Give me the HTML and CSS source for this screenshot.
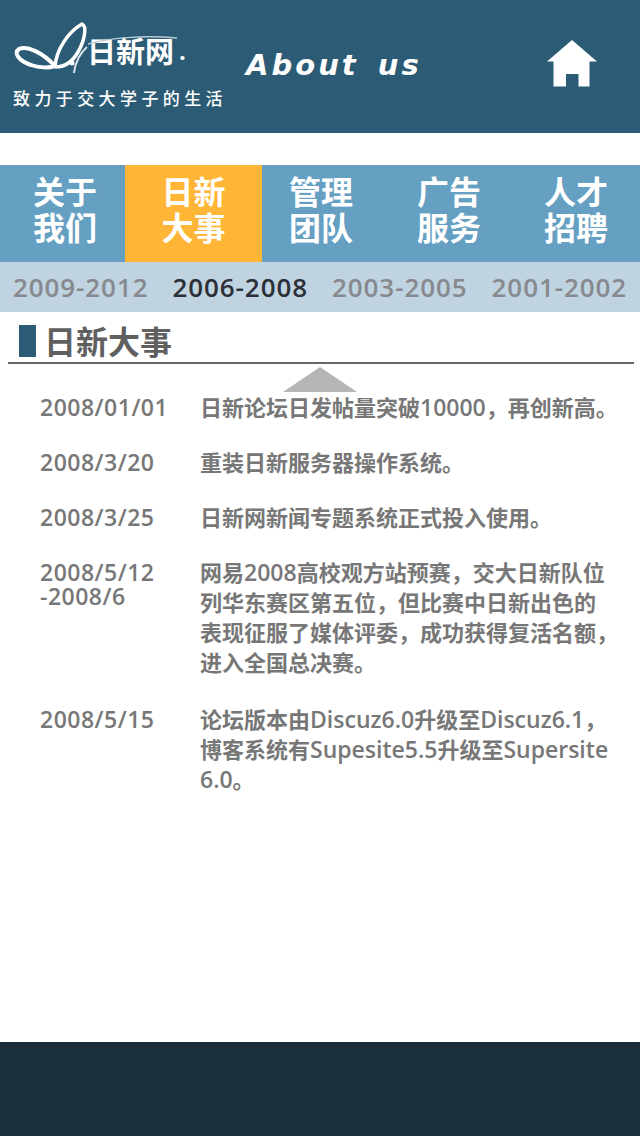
FILE: index.html
```html
<!DOCTYPE html>
<html>
    <head lang="zh-CN">
        <meta charset="UTF-8">
        <title>日新大事</title>
        <link rel="stylesheet" href="styles.css">
    </head>
    <body>
        <div id="header">
            <div id="logo">
                <div id="logo-mark">
                    <svg class="wing" width="170" height="56" viewBox="0 0 170 56">
                        <g fill="none" stroke="#fff">
                            <path stroke-width="4" d="M42 46C30 33 14 25 6 29C0 33 6 41 18 45C26 48 36 48 42 46"/>
                            <path stroke-width="3.5" d="M42 47C43 30 55 12 69 4C74 6 72 20 65 32C60 41 52 47 42 47"/>
                            <path stroke-width="2" stroke="#d8e2e8" d="M61 53C62 42 68 32 74 27"/>
                            <path stroke-width="1.5" stroke="#b9cad5" d="M75 24C95 18 130 15 164 18"/>
                        </g>
                        <circle cx="59" cy="43" r="2.5" fill="#fff"/>
                    </svg>
                    <span id="logo-name">日新网</span><span id="logo-dot">.</span>
                </div>
                <p id="slogan">致力于交大学子的生活</p>
            </div>
            <h1 id="title">About us</h1>
            <svg id="home" width="50" height="47" viewBox="0 0 50 47">
                <path d="M25 0L50 21.5H42.5V46.5H31.5V34H19V46.5H6.5V21.5H0Z" fill="#fff"/>
            </svg>
        </div>

        <ul id="nav">
            <li>关于<br>我们</li>
            <li class="selected">日新<br>大事</li>
            <li>管理<br>团队</li>
            <li>广告<br>服务</li>
            <li>人才<br>招聘</li>
        </ul>

        <ul id="years">
            <li>2009-2012</li>
            <li class="selected">2006-2008</li>
            <li>2003-2005</li>
            <li>2001-2002</li>
        </ul>

        <h2 id="heading">日新大事</h2>

        <div id="content">
            <div id="arrow"></div>
            <div class="event">
                <div class="date">2008/01/01</div>
                <div class="text">日新论坛日发帖量突破<span class="latin">10000</span>，再创新高。</div>
            </div>
            <div class="event">
                <div class="date">2008/3/20</div>
                <div class="text">重装日新服务器操作系统。</div>
            </div>
            <div class="event">
                <div class="date">2008/3/25</div>
                <div class="text">日新网新闻专题系统正式投入使用。</div>
            </div>
            <div class="event">
                <div class="date">2008/5/12<br>-2008/6</div>
                <div class="text">网易<span class="latin">2008</span>高校观方站预赛，交大日新队位<br>列华东赛区第五位，但比赛中日新出色的<br>表现征服了媒体评委，成功获得复活名额，<br>进入全国总决赛。</div>
            </div>
            <div class="event">
                <div class="date">2008/5/15</div>
                <div class="text">论坛版本由<span class="latin">Discuz6.0</span>升级至<span class="latin">Discuz6.1</span>，<br>博客系统有<span class="latin">Supesite5.5</span>升级至<span class="latin">Supersite</span><br><span class="latin">6.0</span>。</div>
            </div>
        </div>

        <div id="footer"></div>
    </body>
</html>
```

FILE: styles.css
```css
*{
    margin:0;
    padding:0;
}
ul,ol{
    list-style:none;
}
html,body{
    height:100%;
}
body{
    display:flex;
    flex-direction:column;
    background-color:#fff;
    font-family:"Open Sans","Noto Sans CJK SC",sans-serif;
    overflow:hidden;
}
#header{
    height:133px;
    flex:none;
    display:flex;
    align-items:flex-start;
    background-color:#2c5b75;
    color:#fff;
}
#logo{
    width:246px;
    flex:none;
    padding:20px 0 0 13px;
    box-sizing:border-box;
}
#logo-mark{
    display:flex;
    align-items:flex-end;
    height:47px;
    position:relative;
}
.wing{
    position:absolute;
    left:0;
    top:0;
}
#logo-name{
    margin-left:74px;
    font-family:"Noto Sans CJK SC",sans-serif;
    font-size:29px;
    line-height:34px;
    font-weight:700;
    white-space:nowrap;
}
#logo-dot{
    font-size:24px;
    line-height:32px;
    font-weight:700;
    margin-left:5px;
}
#slogan{
    margin-top:20px;
    font-family:"Noto Sans CJK SC",serif;
    font-size:17px;
    line-height:22px;
    font-weight:500;
    letter-spacing:4.4px;
    white-space:nowrap;
}
#title{
    width:301px;
    flex:none;
    margin-top:43px;
    font-family:"DejaVu Sans",sans-serif;
    font-style:italic;
    font-size:29px;
    line-height:44px;
    font-weight:700;
    letter-spacing:3px;
    word-spacing:6px;
    white-space:pre;
}
#home{
    flex:none;
    margin-top:40px;
}
#nav{
    flex:none;
    margin-top:32px;
    height:97px;
    display:flex;
    background-color:#659fc2;
    color:#fff;
}
#nav li{
    flex:none;
    box-sizing:border-box;
    padding-top:9px;
    text-align:center;
    font-size:32px;
    line-height:36px;
    font-weight:700;
}
#nav li:nth-child(1){
    width:125px;
    padding-left:5px;
}
#nav li:nth-child(2){
    width:137px;
    background-color:#ffb636;
}
#nav li:nth-child(3){
    width:118px;
}
#nav li:nth-child(4){
    width:138px;
}
#nav li:nth-child(5){
    width:122px;
    padding-right:6px;
}
#years{
    flex:none;
    height:50px;
    display:flex;
    justify-content:space-between;
    padding:0 13px;
    background-color:#bfd4e0;
    color:#88898e;
    font-size:26px;
    line-height:50px;
    font-weight:600;
    letter-spacing:.9px;
}
#years .selected{
    color:#2c2e38;
}
#heading{
    flex:none;
    height:52px;
    margin:0 6px 0 8px;
    padding-left:36px;
    position:relative;
    box-sizing:border-box;
    border-bottom:2px solid #666;
    color:#5f5f5f;
    font-size:32px;
    line-height:60px;
    font-weight:700;
}
#heading:before{
    content:"";
    position:absolute;
    left:11px;
    top:13px;
    width:17px;
    height:32px;
    background-color:#2c5b75;
}
#content{
    flex:1;
    position:relative;
    padding:28px 30px 0 40px;
    color:#777;
    font-size:22px;
    line-height:30px;
    font-weight:700;
}
#arrow{
    position:absolute;
    left:283px;
    top:3px;
    width:0;
    height:0;
    border-left:37.5px solid transparent;
    border-right:37.5px solid transparent;
    border-bottom:25px solid #b5b5b5;
}
.event{
    display:flex;
    margin-bottom:25px;
}
.event:nth-child(5){
    margin-bottom:27px;
}
.date{
    width:160px;
    flex:none;
    font-size:23px;
    line-height:24px;
    font-weight:600;
    letter-spacing:.5px;
    padding-top:3px;
}
.text{
    flex:1;
    white-space:nowrap;
}
.latin{
    font-size:23px;
    font-weight:600;
}
#footer{
    flex:none;
    height:94px;
    background-color:#1a2e3c;
}
```
